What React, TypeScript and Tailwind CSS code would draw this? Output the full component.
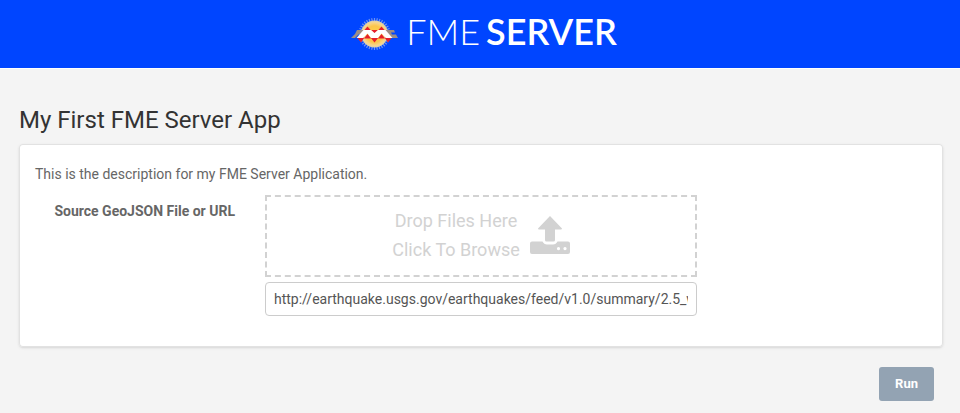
import { useState } from "react";

const TEETH = Array.from({ length: 36 }, (_, i) => i * 10);

function Logo() {
  return (
    <svg viewBox="0 0 48 36" className="h-9 w-12" aria-hidden="true">
      <defs>
        <radialGradient id="sun">
          <stop offset="0" stopColor="#ffd34a" />
          <stop offset="0.6" stopColor="#fcc64a" />
          <stop offset="0.85" stopColor="#f7d58c" />
          <stop offset="1" stopColor="#d9cfae" />
        </radialGradient>
      </defs>
      <g stroke="#6f93f0" strokeWidth="1.2">
        {TEETH.map((a) => (
          <line key={a} x1="23.5" y1="5" x2="23.5" y2="2" transform={`rotate(${a} 23.5 18)`} />
        ))}
      </g>
      <circle cx="23.5" cy="18" r="13.5" fill="url(#sun)" />
      <path d="M6 14H14L11 18H8L4 22H0L4 18ZM33 14H43L44 16.5H40L41 18.5H45L47 22H36Z" fill="#9c8d86" />
      <path d="M13 14.5L16.5 10.5L20 14.5ZM27 14.5L30.5 10.5L34 14.5Z" fill="#e5202b" />
      <path d="M20 14H27L23.5 18ZM6 21.500H13.500L10 26.500ZM19.500 21.500H27.500L23.500 26.500ZM33.500 21.500H41L37 26.500Z" fill="#e5202b" />
      <path d="M5.5 22L12.5 14H20L23.5 17L27 14H34.5L41.5 22H35L30.5 17.5L27 22H20L16.5 17.5L12 22Z" fill="#fff" />
      <path d="M13 22.500L16.500 18L20 22.500ZM27 22.500L30.500 18L34 22.500Z" fill="#e5202b" />
    </svg>
  );
}

function UploadIcon() {
  return (
    <svg viewBox="0 0 40 38" className="h-[38px] w-10" fill="#d2d2d2" aria-hidden="true">
      <path d="M20 0L32 12.5Q32 13.5 31 13.5H25V24Q25 25.5 23.5 25.5H16.5Q15 25.5 15 24V13.5H9Q8 13.5 8 12.5Z" />
      <path
        fillRule="evenodd"
        d="M2 25.5H12.5Q14 28.5 17 28.5H23Q26 28.5 27.5 25.5H38Q40 25.5 40 27.5V36Q40 38 38 38H2Q0 38 0 36V27.5Q0 25.5 2 25.5ZM28.5 31a1.6 1.6 0 1 0 .01 0ZM35 31a1.6 1.6 0 1 0 .01 0Z"
      />
    </svg>
  );
}

export default function App() {
  const [url, setUrl] = useState(
    "http://earthquake.usgs.gov/earthquakes/feed/v1.0/summary/2.5_week.geojson"
  );

  return (
    <div className="min-h-screen bg-[#f4f4f4] font-['Roboto',sans-serif] text-sm text-[#666]">
      <header className="flex h-[69px] items-center justify-center gap-[7px] border-b border-white bg-[#0045ff] pl-2">
        <Logo />
        <div className="flex items-center gap-[6px] pb-[6px] font-['Lato',sans-serif] text-4xl leading-9 text-white">
          <span className="font-light">FME</span>
          <span className="font-semibold">SERVER</span>
        </div>
      </header>

      <main className="pt-[35px] pr-[17px] pl-[19px]">
        <h1 className="text-2xl leading-8 text-[#333]">My First FME Server App</h1>

        <form onSubmit={(e) => e.preventDefault()}>
          <section className="mt-2 rounded bg-white pt-5 pb-[31px] shadow-sm ring-1 ring-[#e2e2e2] ring-inset">
            <p className="px-4 leading-5">This is the description for my FME Server Application.</p>
            <div className="mt-[11px] grid grid-cols-12">
              <label htmlFor="source" className="col-span-3 pt-[6px] pr-[15px] text-right leading-5 font-bold">
                Source GeoJSON File or URL
              </label>
              <div className="col-span-6 px-[15px]">
                <button
                  type="button"
                  className="flex h-[82px] w-full items-center justify-center gap-[10px] border-2 border-dashed border-[#d2d2d2] pb-[2px] text-lg text-[#d2d2d2]"
                >
                  <span className="leading-[29px]">
                    Drop Files Here
                    <br />
                    Click To Browse
                  </span>
                  <UploadIcon />
                </button>
                <input
                  id="source"
                  type="text"
                  value={url}
                  onChange={(e) => setUrl(e.target.value)}
                  className="mt-[5px] block h-[34px] w-full rounded border border-[#ccc] bg-white px-2 text-sm text-[#555]"
                />
              </div>
            </div>
          </section>

          <div className="mt-5 flex justify-end pr-[9px]">
            <button type="submit" className="h-[34px] rounded-[3px] bg-[#93a3b3] px-4 text-[13px] font-bold text-white">
              Run
            </button>
          </div>
        </form>
      </main>
    </div>
  );
}
